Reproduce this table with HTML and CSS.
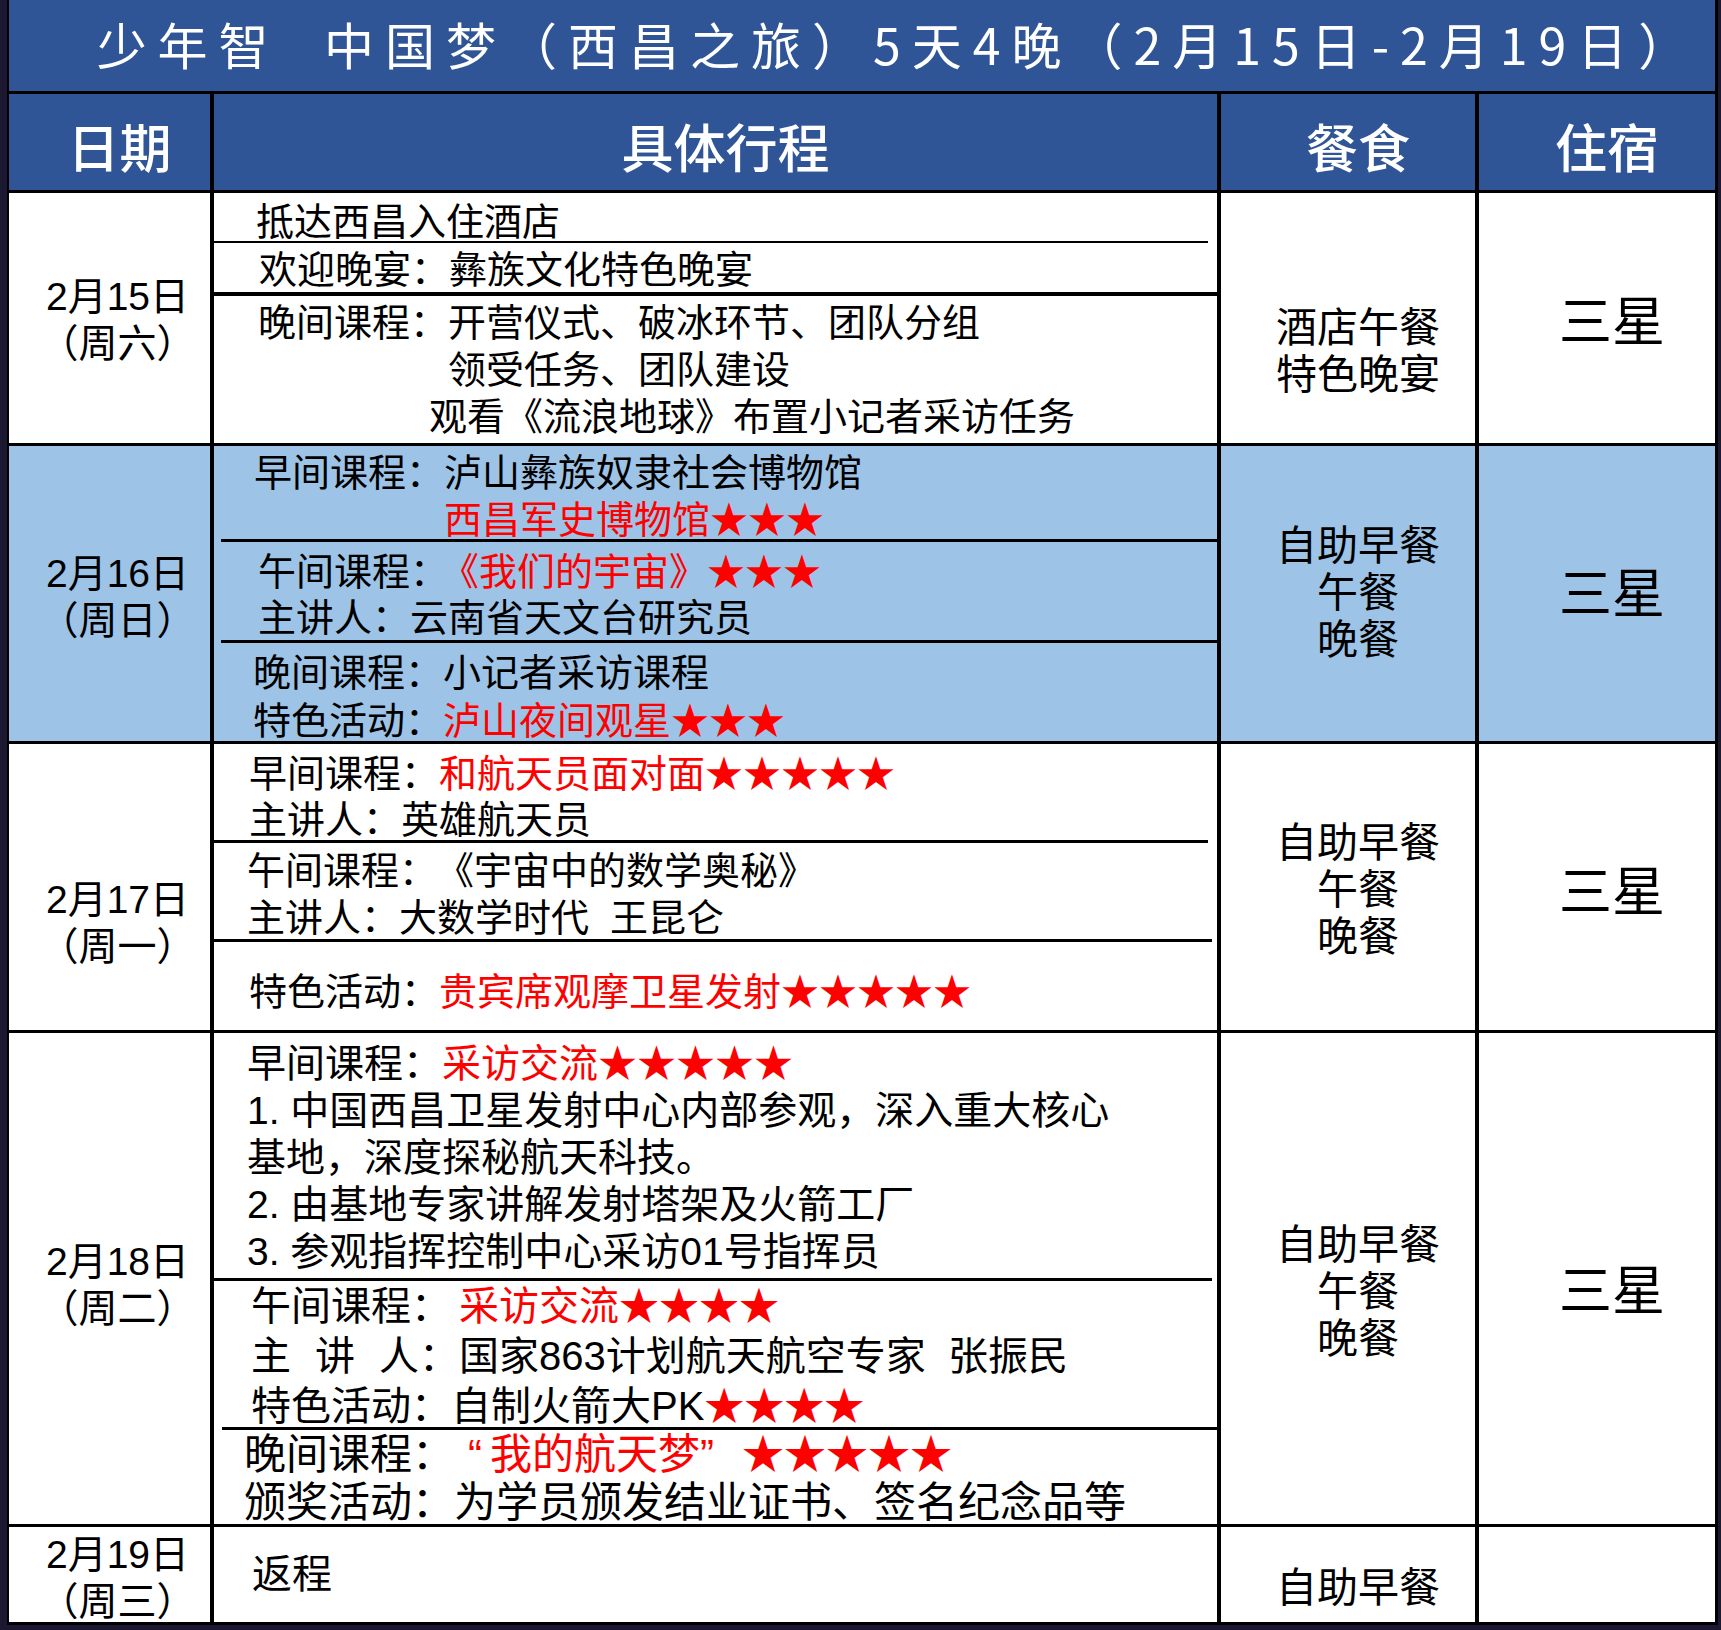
FILE: index.html
```html
<!DOCTYPE html>
<html lang="zh-CN">
<head>
<meta charset="utf-8">
<title>少年智 中国梦（西昌之旅）</title>
<link rel="stylesheet" href="styles.css">
</head>
<body>
<div class="sheet">
  <div class="table">
    <div class="title">少年智&nbsp;&nbsp;中国梦（西昌之旅）5天4晚（2月15日-2月19日）</div>

    <div class="hd">日期</div>
    <div class="hd">具体行程</div>
    <div class="hd">餐食</div>
    <div class="hd">住宿</div>

    <!-- 2/15 -->
    <div class="date date-r1"><div>2月15日</div><div>（周六）</div></div>
    <div class="plan">
      <div class="sec r1a"><div class="ln">抵达西昌入住酒店</div></div>
      <div class="sec r1b"><div class="ln">欢迎晚宴：彝族文化特色晚宴</div></div>
      <div class="sec r1c">
        <div class="ln">晚间课程：开营仪式、破冰环节、团队分组</div>
        <div class="ln ind5">领受任务、团队建设</div>
        <div class="ln ind45">观看《流浪地球》布置小记者采访任务</div>
      </div>
    </div>
    <div class="meal meal-r1"><div>酒店午餐</div><div>特色晚宴</div></div>
    <div class="stay">三星</div>

    <!-- 2/16 -->
    <div class="date alt"><div>2月16日</div><div>（周日）</div></div>
    <div class="plan alt">
      <div class="sec r2a">
        <div class="ln">早间课程：泸山彝族奴隶社会博物馆</div>
        <div class="ln ind5"><span class="hl">西昌军史博物馆★★★</span></div>
      </div>
      <div class="sec r2b">
        <div class="ln">午间课程：<span class="hl gap-s">《我们的宇宙》★★★</span></div>
        <div class="ln">主讲人：云南省天文台研究员</div>
      </div>
      <div class="sec r2c">
        <div class="ln">晚间课程：小记者采访课程</div>
        <div class="ln">特色活动：<span class="hl">泸山夜间观星★★★</span></div>
      </div>
    </div>
    <div class="meal meal-up alt"><div>自助早餐</div><div>午餐</div><div>晚餐</div></div>
    <div class="stay stay-up alt">三星</div>

    <!-- 2/17 -->
    <div class="date date-r3"><div>2月17日</div><div>（周一）</div></div>
    <div class="plan">
      <div class="sec r3a">
        <div class="ln">早间课程：<span class="hl">和航天员面对面★★★★★</span></div>
        <div class="ln">主讲人：英雄航天员</div>
      </div>
      <div class="sec r3b">
        <div class="ln">午间课程：<span class="gap-m">《宇宙中的数学奥秘》</span></div>
        <div class="ln">主讲人：大数学时代&nbsp;&nbsp;王昆仑</div>
      </div>
      <div class="sec r3c">
        <div class="ln">特色活动：<span class="hl">贵宾席观摩卫星发射★★★★★</span></div>
      </div>
    </div>
    <div class="meal"><div>自助早餐</div><div>午餐</div><div>晚餐</div></div>
    <div class="stay stay-r3">三星</div>

    <!-- 2/18 -->
    <div class="date date-r4"><div>2月18日</div><div>（周二）</div></div>
    <div class="plan">
      <div class="sec r4a">
        <div class="ln">早间课程：<span class="hl">采访交流★★★★★</span></div>
        <div class="ln">1. 中国西昌卫星发射中心内部参观，深入重大核心</div>
        <div class="ln">基地，深度探秘航天科技。</div>
        <div class="ln">2. 由基地专家讲解发射塔架及火箭工厂</div>
        <div class="ln">3. 参观指挥控制中心采访01号指挥员</div>
      </div>
      <div class="sec r4b">
        <div class="ln">午间课程：<span class="hl gap-xs">采访交流★★★★</span></div>
        <div class="ln"><span class="spread">主讲</span>人：国家863计划航天航空专家&nbsp;&nbsp;张振民</div>
        <div class="ln">特色活动：自制火箭大PK<span class="hl">★★★★</span></div>
      </div>
      <div class="sec r4c">
        <div class="ln">晚间课程：<span class="hl gap-q"><span class="qo">“</span>我的航天梦<span class="qc">”</span>★★★★★</span></div>
        <div class="ln">颁奖活动：为学员颁发结业证书、签名纪念品等</div>
      </div>
    </div>
    <div class="meal meal-low"><div>自助早餐</div><div>午餐</div><div>晚餐</div></div>
    <div class="stay stay-r4">三星</div>

    <!-- 2/19 -->
    <div class="date"><div>2月19日</div><div>（周三）</div></div>
    <div class="plan">
      <div class="sec r5"><div class="ln">返程</div></div>
    </div>
    <div class="meal meal-low"><div>自助早餐</div></div>
    <div class="stay"></div>
  </div>
</div>
</body>
</html>
```

FILE: styles.css
```css
* {
  box-sizing: border-box;
}

html,
body {
  margin: 0;
  padding: 0;
}

body {
  width: 1721px;
  height: 1630px;
  overflow: hidden;
  background: #1d1832;
  font-family: "Noto Sans CJK SC", "Noto Sans", sans-serif;
  color: #000;
}

.sheet {
  padding-left: 7px;
}

.table {
  display: grid;
  width: 1711px;
  grid-template-columns: 201px 1003px 254px 236px;
  grid-template-rows: 91px 96px 250px 295px 286px 491px 95px;
  gap: 3px 4px;
  background: #000;
  border-style: solid;
  border-color: #000;
  border-width: 0 3px 3px 2px;
}

.title {
  grid-column: 1 / -1;
  background: #2f5597;
  color: #fff;
  font-size: 50px;
  letter-spacing: 11px;
  white-space: nowrap;
  display: flex;
  align-items: center;
  justify-content: center;
  padding: 0 0 6px 72px;
}

.hd {
  background: #2f5597;
  color: #fff;
  font-size: 52px;
  font-weight: 500;
  display: flex;
  align-items: center;
  justify-content: center;
  padding: 6px 0 0 20px;
}

.date,
.plan,
.meal,
.stay {
  background: #fff;
}

.date.alt,
.plan.alt,
.meal.alt,
.stay.alt {
  background: #9dc3e6;
}

/* multi-line cells: Latin primary font keeps line boxes compact, CJK glyphs fall back to Noto */
.date,
.plan,
.meal {
  font-family: "Liberation Sans", "Noto Sans CJK SC", sans-serif;
}

.date {
  display: flex;
  flex-direction: column;
  justify-content: center;
  align-items: center;
  font-size: 39px;
  line-height: 47px;
  padding: 7px 0 0 16px;
}

.date-r1 {
  padding-bottom: 4px;
}

.date-r3 {
  padding-top: 71px;
}

.date-r4 {
  padding-top: 13px;
}

.plan {
  display: flex;
  flex-direction: column;
  font-size: 38px;
  white-space: nowrap;
}

.sec {
  flex: none;
  border-bottom: 3px solid #000;
}

.sec:last-child {
  flex: 1;
  border-bottom: none;
}

.ind5 {
  padding-left: 5em;
}

.ind45 {
  padding-left: 4.5em;
}

.hl {
  color: #ff0000;
}

.gap-xs {
  margin-left: 8px;
}

.gap-s {
  margin-left: 12px;
}

.gap-m {
  margin-left: 18px;
}

.gap-q {
  margin-left: 14px;
}

.qo {
  margin-right: 8px;
}

.qc {
  margin-right: 28px;
}

.spread {
  letter-spacing: 24px;
}

/* row 1 */
.r1a {
  height: 50px;
  border-bottom-width: 2px;
  margin-right: 9px;
  padding: 7px 0 0 42px;
  line-height: 44px;
}

.r1b {
  height: 53px;
  border-bottom-width: 4px;
  padding: 5px 0 0 45px;
  line-height: 44px;
}

.r1c {
  padding: 4px 0 0 44px;
  line-height: 47px;
}

/* row 2 */
.r2a {
  height: 96px;
  margin-left: 7px;
  padding: 4px 0 0 33px;
  line-height: 47px;
}

.r2b {
  height: 101px;
  margin-left: 7px;
  padding: 7px 0 0 37px;
  line-height: 46px;
}

.r2c {
  padding: 6px 0 0 39px;
  line-height: 48px;
}

/* row 3 */
.r3a {
  height: 99px;
  margin-right: 9px;
  padding: 7px 0 0 35px;
  line-height: 46px;
}

.r3b {
  height: 99px;
  margin-right: 5px;
  padding: 5px 0 0 33px;
  line-height: 47px;
}

.r3c {
  padding: 27px 0 0 35px;
  line-height: 46px;
}

/* row 4 */
.r4a {
  height: 248px;
  margin-right: 5px;
  padding: 7px 0 0 33px;
  font-size: 39px;
  line-height: 47px;
}

.r4b {
  height: 149px;
  margin-left: 8px;
  padding: 4px 0 0 29px;
  font-size: 40px;
}

.r4b .ln {
  line-height: 42px;
  margin-bottom: 8px;
}

.r4c {
  padding: 4px 0 0 30px;
  font-size: 42px;
}

.r4c .ln {
  line-height: 42px;
  margin-bottom: 6px;
}

/* row 5 */
.r5 {
  display: flex;
  align-items: center;
  padding: 0 0 7px 38px;
  font-size: 40px;
}

.meal {
  display: flex;
  flex-direction: column;
  justify-content: center;
  align-items: center;
  font-size: 41px;
  line-height: 47px;
  padding: 7px 0 0 20px;
}

.meal-r1 {
  padding-top: 67px;
}

.meal-up {
  padding-top: 0;
  padding-bottom: 1px;
}

.meal-low {
  padding-top: 27px;
}

.stay {
  display: flex;
  align-items: center;
  justify-content: center;
  font-size: 53px;
  padding-left: 30px;
}

.stay-up {
  padding-bottom: 8px;
}

.stay-r3 {
  padding-top: 2px;
}

.stay-r4 {
  padding-top: 16px;
}
```
